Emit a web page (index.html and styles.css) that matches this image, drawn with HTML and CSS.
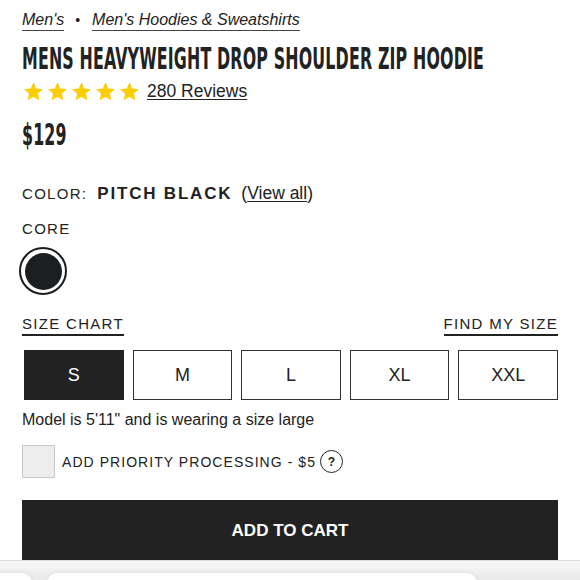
FILE: index.html
```html
<!DOCTYPE html>
<html>
<head>
<meta charset="utf-8">
<link rel="stylesheet" href="styles.css">
</head>
<body>
<div class="page">
  <nav class="crumbs">
    <a class="crumb">Men's</a>
    <span class="dot">&bull;</span>
    <a class="crumb">Men's Hoodies &amp; Sweatshirts</a>
  </nav>
  <h1 class="title"><span class="cond">MENS HEAVYWEIGHT DROP SHOULDER ZIP HOODIE</span></h1>
  <div class="rating">
    <div class="stars">
      <svg viewBox="0 0 24 24" class="star"><path d="M12 1.5l3.1 7.1 7.7.7-5.8 5.1 1.7 7.6L12 18l-6.7 4 1.7-7.6-5.8-5.1 7.7-.7z"/></svg>
      <svg viewBox="0 0 24 24" class="star"><path d="M12 1.5l3.1 7.1 7.7.7-5.8 5.1 1.7 7.6L12 18l-6.7 4 1.7-7.6-5.8-5.1 7.7-.7z"/></svg>
      <svg viewBox="0 0 24 24" class="star"><path d="M12 1.5l3.1 7.1 7.7.7-5.8 5.1 1.7 7.6L12 18l-6.7 4 1.7-7.6-5.8-5.1 7.7-.7z"/></svg>
      <svg viewBox="0 0 24 24" class="star"><path d="M12 1.5l3.1 7.1 7.7.7-5.8 5.1 1.7 7.6L12 18l-6.7 4 1.7-7.6-5.8-5.1 7.7-.7z"/></svg>
      <svg viewBox="0 0 24 24" class="star"><path d="M12 1.5l3.1 7.1 7.7.7-5.8 5.1 1.7 7.6L12 18l-6.7 4 1.7-7.6-5.8-5.1 7.7-.7z"/></svg>
    </div>
    <a class="reviews">280 Reviews</a>
  </div>
  <div class="price"><span class="cond">$129</span></div>
  <div class="color-row">
    <span class="label">COLOR:</span>
    <span class="color-name">PITCH BLACK</span>
    <span class="viewall">(<a>View all</a>)</span>
  </div>
  <div class="core">CORE</div>
  <div class="swatch"><span class="swatch-inner"></span></div>
  <div class="size-links">
    <a class="size-link">SIZE CHART</a>
    <a class="size-link">FIND MY SIZE</a>
  </div>
  <div class="sizes">
    <div class="size active">S</div>
    <div class="size">M</div>
    <div class="size">L</div>
    <div class="size">XL</div>
    <div class="size">XXL</div>
  </div>
  <p class="model">Model is 5'11" and is wearing a size large</p>
  <div class="priority">
    <span class="checkbox"></span>
    <span class="priority-text">ADD PRIORITY PROCESSING - $5</span>
    <span class="help">?</span>
  </div>
  <button class="cart">ADD TO CART</button>
</div>
<div class="bottom-bar">
  <div class="pill small"></div>
  <div class="pill big"></div>
</div>
</body>
</html>
```

FILE: styles.css
```css
* { box-sizing: border-box; }
html, body { margin: 0; padding: 0; background: #fff; }
body {
  font-family: "Liberation Sans", Arial, sans-serif;
  color: #222;
  width: 580px;
  height: 580px;
  overflow: hidden;
  position: relative;
}
.page {
  padding: 9px 22px 0 22px;
  display: flex;
  flex-direction: column;
}
.crumbs {
  display: flex;
  align-items: center;
  font-style: italic;
  font-size: 16px;
  line-height: 22px;
  height: 22px;
}
.crumb {
  border-bottom: 1px solid #444;
  line-height: 21px;
}
.dot { margin: 0 12px 0 11px; font-style: normal; font-size: 14px; }
.title {
  margin: 15px 0 0 0;
  font-weight: 700;
  font-size: 22px;
  line-height: 30px;
  height: 30px;
  color: #222;
  white-space: nowrap;
  overflow: visible;
}
.cond {
  display: inline-block;
  font-family: "Liberation Sans Narrow", "DejaVu Sans Condensed", sans-serif;
  font-weight: 700;
  transform: scale(0.8, 1.36);
  transform-origin: 0 60%;
  letter-spacing: 0.2px;
}
.rating {
  display: flex;
  align-items: center;
  margin-top: 3px;
  height: 24px;
}
.stars { display: flex; gap: 3px; margin-left: 1px; }
.star { width: 21px; height: 21px; fill: #ffcc00; }
.reviews {
  margin-left: 7px;
  font-size: 17.5px;
  text-decoration: underline;
  text-underline-offset: 2px;
}
.price {
  margin-top: 19px;
  font-size: 22px;
  line-height: 30px;
  height: 30px;
}
.color-row {
  margin-top: 31px;
  display: flex;
  align-items: baseline;
  font-size: 15px;
  letter-spacing: 1.3px;
}
.label { margin-right: 10px; }
.color-name { font-weight: 700; font-size: 17px; letter-spacing: 1.8px; margin-right: 9px; }
.viewall { font-size: 17.5px; letter-spacing: 0; }
.viewall a { text-decoration: underline; text-underline-offset: 2px; }
.core {
  margin-top: 16px;
  font-size: 15px;
  letter-spacing: 1.3px;
  line-height: 18px;
}
.swatch {
  margin-top: 9px;
  margin-left: -3px;
  width: 48px;
  height: 48px;
  border-radius: 50%;
  border: 2.5px solid #1c1c1c;
  display: flex;
  align-items: center;
  justify-content: center;
}
.swatch-inner {
  width: 37px;
  height: 37px;
  border-radius: 50%;
  background: #1c1f22;
}
.size-links {
  margin-top: 20px;
  display: flex;
  justify-content: space-between;
  font-size: 15px;
  letter-spacing: 1.3px;
  line-height: 17px;
}
.size-link { border-bottom: 2px solid #222; padding-bottom: 2px; }
.sizes {
  margin-top: 14px;
  margin-left: 2px;
  display: grid;
  grid-template-columns: repeat(5, 1fr);
  gap: 9px;
}
.size {
  height: 50px;
  border: 1.5px solid #333;
  display: flex;
  align-items: center;
  justify-content: center;
  font-size: 18px;
  color: #222;
}
.size.active { background: #222; color: #fff; border-color: #222; }
.model {
  margin: 10px 0 0 0;
  font-size: 16px;
  line-height: 20px;
}
.priority {
  margin-top: 15px;
  display: flex;
  align-items: center;
}
.checkbox {
  width: 33px;
  height: 33px;
  background: #ededed;
  border: 1px solid #c8c8c8;
}
.priority-text {
  margin-left: 7px;
  font-size: 14px;
  letter-spacing: 1.05px;
}
.help {
  margin-left: 4px;
  width: 23px;
  height: 23px;
  border: 1.5px solid #222;
  border-radius: 50%;
  display: flex;
  align-items: center;
  justify-content: center;
  font-size: 12px;
  font-weight: 700;
}
.cart {
  margin-top: 22px;
  height: 61px;
  background: #222;
  color: #fff;
  border: none;
  font-family: "Liberation Sans", Arial, sans-serif;
  font-weight: 700;
  font-size: 17px;
  width: 100%;
}
.bottom-bar {
  position: absolute;
  left: 0;
  right: 0;
  top: 560px;
  height: 20px;
  background: linear-gradient(#f7f7f7, #e9e9e9);
  border-top: 1px solid #ddd;
}
.pill {
  position: absolute;
  top: 12px;
  height: 20px;
  background: #fff;
  border-radius: 10px;
  box-shadow: 0 0 4px rgba(0,0,0,0.08);
}
.pill.small { left: -20px; width: 52px; }
.pill.big { left: 47px; width: 430px; }
```
